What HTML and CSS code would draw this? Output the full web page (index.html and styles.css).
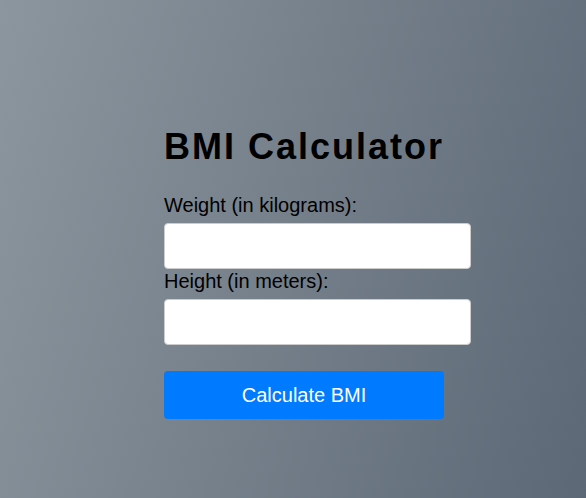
FILE: index.html
```html
<!DOCTYPE html>
<html lang="en">
<head>
<meta charset="utf-8">
<title>BMI Calculator</title>
<link rel="stylesheet" href="styles.css">
</head>
<body>
<main class="calculator">
  <h1 class="title">BMI Calculator</h1>
  <form class="form">
    <label class="label" for="weight">Weight (in kilograms):</label>
    <input class="field" id="weight" type="number">
    <label class="label" for="height">Height (in meters):</label>
    <input class="field" id="height" type="number">
    <button class="btn" type="button">Calculate BMI</button>
  </form>
</main>
</body>
</html>
```

FILE: styles.css
```css
html, body {
  margin: 0;
  height: 100%;
}
body {
  background: linear-gradient(105deg, #8c969e 0%, #5c6876 100%);
  font-family: "Liberation Sans", Arial, sans-serif;
  color: #000;
}
.calculator {
  padding: 126px 0 0 164px;
}
.title {
  font-size: 36px;
  font-weight: bold;
  letter-spacing: 2px;
  margin: 0 0 27px;
  line-height: 41px;
}
.form {
  display: flex;
  flex-direction: column;
  align-items: flex-start;
}
.label {
  font-size: 20px;
  line-height: 23px;
  margin-bottom: 6px;
}
.field {
  box-sizing: border-box;
  width: 307px;
  height: 46px;
  border: 1px solid #ccc;
  border-radius: 4px;
  background: #fff;
  margin: 0 0 1px;
}
.btn {
  margin-top: 25px;
  width: 280px;
  height: 48px;
  border: none;
  border-radius: 4px;
  background: #007bff;
  color: #fff;
  font-family: "Liberation Sans", Arial, sans-serif;
  font-size: 20px;
}
```
